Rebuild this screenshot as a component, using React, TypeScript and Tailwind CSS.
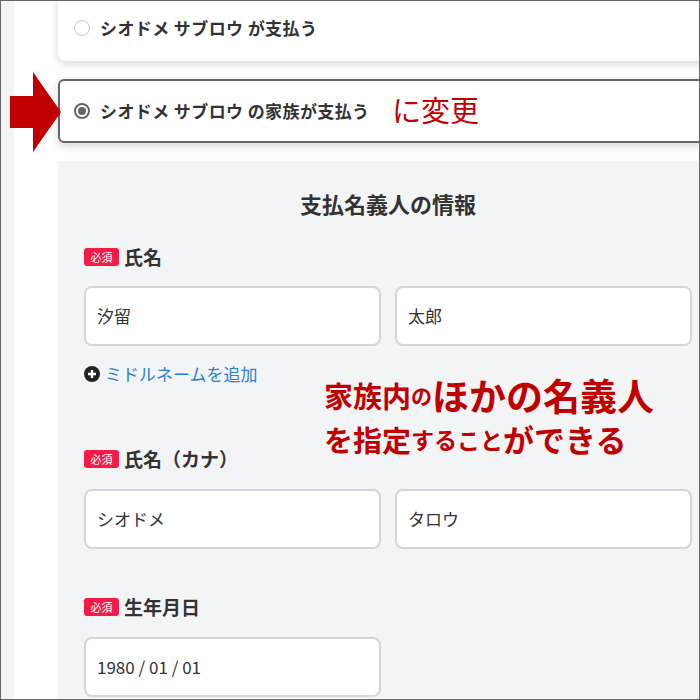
import React from 'react';

const font = "font-['Noto_Sans_CJK_JP','Noto_Sans',sans-serif]";

function Badge() {
  return (
    <span className="inline-flex items-center justify-center w-[35px] h-[18px] rounded-[3px] bg-[#f51a48] text-white text-[11px] leading-none">
      必須
    </span>
  );
}

function Label({ text }: { text: string }) {
  return (
    <div className="flex items-center gap-[5px] h-[28px]">
      <Badge />
      <span className="text-[19px] font-bold text-[#333] leading-[28px]">{text}</span>
    </div>
  );
}

function Field({ value }: { value: string }) {
  return (
    <div className="h-[60px] rounded-lg border-2 border-[#d4d5d9] bg-white flex items-center px-[11px] text-[17px] text-[#333]">
      {value}
    </div>
  );
}

function Radio({ checked }: { checked?: boolean }) {
  return checked ? (
    <span className="w-[16px] h-[16px] rounded-full border-2 border-[#666] flex items-center justify-center shrink-0">
      <span className="w-[8px] h-[8px] rounded-full bg-[#666]" />
    </span>
  ) : (
    <span className="w-[16px] h-[16px] rounded-full border-[1.5px] border-[#c8c8c8] shrink-0" />
  );
}

export default function App() {
  return (
    <div className={`${font} relative w-[700px] h-[700px] overflow-hidden border border-[#666] bg-white flex`}>
      <div className="w-[13px] shrink-0 bg-[#f3f3f3]" />
      <div className="pl-[44px]">
        <div className="w-[660px] flex flex-col">
          {/* option 1 */}
          <div className="-mt-[16px] h-[76px] pt-[10px] rounded-lg bg-white shadow-[0_3px_8px_rgba(0,0,0,0.16)] flex items-center pl-[16px] gap-[10px]">
            <Radio />
            <span className="text-[17px] font-bold text-[#333] tracking-[0.4px]">シオドメ サブロウ が支払う</span>
          </div>

          {/* option 2 (selected) */}
          <div className="mt-[18px] h-[64px] rounded-md border-2 border-[#666] bg-white shadow-[0_3px_8px_rgba(0,0,0,0.16)] flex items-center pl-[14px] gap-[10px]">
            <Radio checked />
            <span className="text-[17px] font-bold text-[#333] tracking-[0.4px]">シオドメ サブロウ の家族が支払う</span>
          </div>

          {/* payer info */}
          <div className="mt-[18px] h-[560px] bg-[#f3f4f6] px-[26px] pt-[28px]">
            <h2 className="text-center text-[22px] font-bold text-[#333] leading-[28px]">支払名義人の情報</h2>

            <div className="mt-[26px]">
              <Label text="氏名" />
              <div className="mt-[15px] grid grid-cols-2 gap-[14px]">
                <Field value="汐留" />
                <Field value="太郎" />
              </div>
              <div className="mt-[16px] flex items-center gap-[5px] h-[24px]">
                <span className="w-[16px] h-[16px] rounded-full bg-[#222] text-white flex items-center justify-center">
                  <svg width="10" height="10" viewBox="0 0 10 10">
                    <path d="M5 1v8M1 5h8" stroke="white" strokeWidth="2.4" />
                  </svg>
                </span>
                <span className="text-[17px] text-[#2d7fd3] leading-[24px]">ミドルネームを追加</span>
              </div>
            </div>

            <div className="mt-[59px]">
              <Label text="氏名（カナ）" />
              <div className="mt-[16px] grid grid-cols-2 gap-[14px]">
                <Field value="シオドメ" />
                <Field value="タロウ" />
              </div>
            </div>

            <div className="mt-[44px]">
              <Label text="生年月日" />
              <div className="mt-[16px] grid grid-cols-2 gap-[14px]">
                <Field value="1980 / 01 / 01" />
              </div>
            </div>
          </div>
        </div>
      </div>

      {/* annotations */}
      <svg className="absolute left-[9px] top-[71px]" width="52" height="80" viewBox="0 0 52 80">
        <polygon points="0,24 23,24 23,0 51,40 23,80 23,56 0,56" fill="#c00000" />
      </svg>
      <div className="absolute left-[391px] top-[88px] text-[29px] text-[#c00000] leading-[40px]">に変更</div>
      <div className="absolute left-[323px] top-[374px] text-[#c00000] font-bold">
        <div className="flex items-end leading-[40px]">
          <span className="text-[29px]">家族内</span>
          <span className="text-[21px]">の</span>
          <span className="text-[37px]">ほかの名義人</span>
        </div>
        <div className="flex items-end leading-[40px] mt-[4px]">
          <span className="text-[29px]">を指定</span>
          <span className="text-[23px]">すること</span>
          <span className="text-[31px]">ができる</span>
        </div>
      </div>
    </div>
  );
}
